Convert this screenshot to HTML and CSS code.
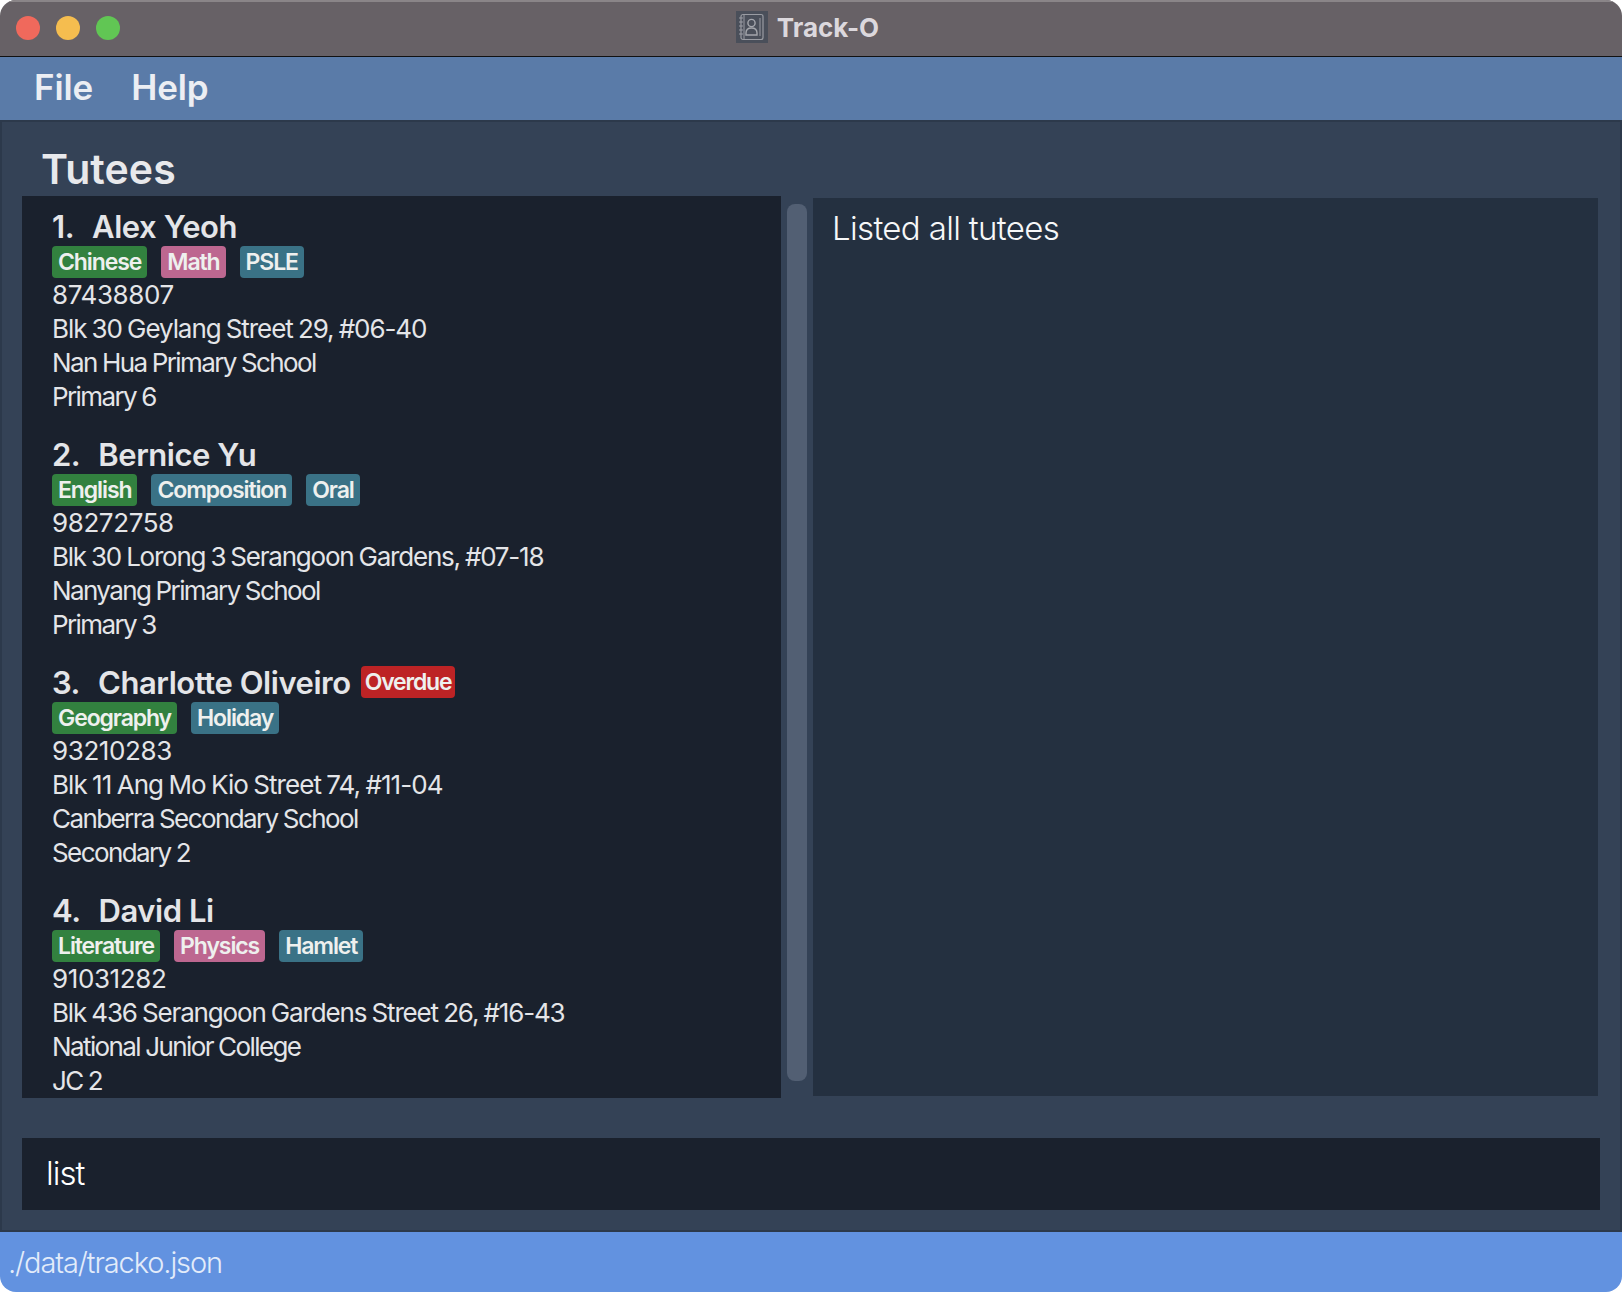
FILE: index.html
```html
<!DOCTYPE html>
<html lang="en">
<head>
<meta charset="utf-8">
<title>Track-O</title>
<link rel="stylesheet" href="styles.css">
</head>
<body>
<div class="window">
  <header class="titlebar">
    <div class="lights"><span class="light red"></span><span class="light yellow"></span><span class="light green"></span></div>
    <div class="title">
      <svg class="app-icon" viewBox="0 0 32 32" width="32" height="32" aria-hidden="true">
        <rect width="32" height="32" fill="#4a4f5a"/>
        <rect x="5" y="3.500" width="22" height="25" rx="2" fill="none" stroke="#9a9ca3" stroke-width="1.200"/>
        <path d="M8 3.500V28.500M24 7V25" fill="none" stroke="#9a9ca3" stroke-width="1"/>
        <path d="M3 7h4M3 11h4M3 15h4M3 19h4M3 23h4" stroke="#9a9ca3" stroke-width="1.200" fill="none"/>
        <circle cx="15.500" cy="12" r="3.600" fill="none" stroke="#a5a7ad" stroke-width="1.400"/>
        <path d="M10 24v-2c0-3 2-5 5.500-5s5.500 2 5.500 5v2z" fill="none" stroke="#a5a7ad" stroke-width="1.400"/>
      </svg>
      <span>Track-O</span>
    </div>
  </header>
  <nav class="menubar"><span>File</span><span>Help</span></nav>
  <main class="content">
    <h1 class="heading">Tutees</h1>
    <div class="panes">
      <section class="list">
        <article class="card">
          <div class="name-row"><span class="num">1.</span><span>Alex Yeoh</span></div>
          <div class="tags"><span class="tag subject">Chinese</span><span class="tag pink">Math</span><span class="tag teal">PSLE</span></div>
          <p class="phone">87438807</p><p class="addr">Blk 30 Geylang Street 29, #06-40</p><p>Nan Hua Primary School</p><p>Primary 6</p>
        </article>
        <article class="card">
          <div class="name-row"><span class="num">2.</span><span>Bernice Yu</span></div>
          <div class="tags"><span class="tag subject">English</span><span class="tag teal">Composition</span><span class="tag teal">Oral</span></div>
          <p class="phone">98272758</p><p class="addr addr-tight">Blk 30 Lorong 3 Serangoon Gardens, #07-18</p><p>Nanyang Primary School</p><p>Primary 3</p>
        </article>
        <article class="card">
          <div class="name-row"><span class="num">3.</span><span>Charlotte Oliveiro</span><span class="tag overdue">Overdue</span></div>
          <div class="tags"><span class="tag subject">Geography</span><span class="tag teal">Holiday</span></div>
          <p class="phone">93210283</p><p class="addr addr-loose">Blk 11 Ang Mo Kio Street 74, #11-04</p><p>Canberra Secondary School</p><p>Secondary 2</p>
        </article>
        <article class="card">
          <div class="name-row"><span class="num">4.</span><span>David Li</span></div>
          <div class="tags"><span class="tag subject">Literature</span><span class="tag pink">Physics</span><span class="tag teal">Hamlet</span></div>
          <p class="phone">91031282</p><p class="addr addr-long">Blk 436 Serangoon Gardens Street 26, #16-43</p><p>National Junior College</p><p>JC 2</p>
        </article>
      </section>
      <div class="scrolltrack"><div class="thumb"></div></div>
      <section class="result">Listed all tutees</section>
    </div>
    <div class="command">list</div>
  </main>
  <footer class="status">./data/tracko.json</footer>
</div>
</body>
</html>
```
FILE: styles.css
```css
* { box-sizing: border-box; }
html, body { margin: 0; padding: 0; background: #fff; }
body { width: 1622px; height: 1292px; overflow: hidden; font-family: Inter, "Liberation Sans", sans-serif; }
.window { width: 1622px; height: 1292px; display: flex; flex-direction: column; border-radius: 16px; overflow: hidden; }
.titlebar { height: 57px; flex: none; background: #676166; border-top: 2px solid #8a8588; border-bottom: 1px solid #111; position: relative; display: flex; align-items: center; justify-content: center; padding-bottom: 4px; }
.lights { position: absolute; left: 16px; top: 14px; display: flex; gap: 16px; }
.light { width: 24px; height: 24px; border-radius: 50%; }
.red { background: #f0695c; }
.yellow { background: #f5bd4f; }
.green { background: #61c654; }
.title { display: flex; align-items: center; gap: 9px; font-size: 26px; font-weight: 700; color: #dcd8dd; margin-left: -7px; }
.app-icon { display: block; }
.menubar { height: 63px; flex: none; background: #5a7ba8; display: flex; align-items: center; gap: 38px; padding: 0 0 3px 34px; font-size: 35px; font-weight: 600; letter-spacing: -0.1px; color: #eceef3; }
.content { flex: 1; min-height: 0; background: #344256; border: 2px solid #2c394b; padding: 0 20px; display: flex; flex-direction: column; }
.heading { margin: 25px 0 0 19px; height: 49px; line-height: 44px; font-size: 41px; font-weight: 600; letter-spacing: 0.1px; color: #e8e9ec; }
.panes { display: flex; height: 902px; flex: none; align-items: flex-start; }
.list { width: 759px; height: 902px; flex: none; background: #1a212d; overflow: hidden; padding: 12px 0 0 30px; color: #e4e5e8; }
.card { height: 228px; }
.card p { margin: 0; height: 34px; line-height: 34px; font-size: 26px; font-weight: 400; letter-spacing: -1.6px; word-spacing: -0.5px; white-space: nowrap; }
.card .phone { letter-spacing: -0.4px; }
.card .addr { letter-spacing: -1.08px; word-spacing: -1px; }
.card .addr-tight { letter-spacing: -1.22px; }
.card .addr-long { letter-spacing: -1.15px; }
.card .addr-loose { letter-spacing: -0.95px; }
.name-row { display: flex; align-items: center; height: 38px; padding-bottom: 2px; font-size: 31px; font-weight: 600; letter-spacing: -0.45px; }
.num { margin-right: 18px; }
.tags { display: flex; gap: 14px; height: 32px; }
.tag { display: inline-block; height: 32px; line-height: 33px; padding: 0 6px; border-radius: 4px; font-size: 23px; font-weight: 600; letter-spacing: -1.1px; color: #eef0ee; white-space: nowrap; }
.subject { background: #32813f; }
.pink { background: #bd6790; }
.teal { background: #3a7286; }
.overdue { background: #bd2325; margin-left: 10px; padding: 0 4px; letter-spacing: -1.2px; }
.scrolltrack { width: 32px; height: 902px; flex: none; padding: 8px 6px 0 6px; }
.thumb { width: 20px; height: 877px; border-radius: 8px; background: #525f73; }
.result { flex: none; width: 785px; height: 898px; margin-top: 2px; background: #243040; color: #f6f7f8; font-size: 33px; font-weight: 300; padding: 10px 19px; letter-spacing: -0.65px; }
.command { height: 72px; flex: none; margin-top: 40px; background: #1a212d; color: #fff; font-size: 33px; font-weight: 300; letter-spacing: -1px; line-height: 70px; padding-left: 24px; }
.status { height: 60px; flex: none; background: #6292e0; color: #e3ecfa; font-size: 29px; font-weight: 300; letter-spacing: -1.1px; line-height: 62px; padding-left: 8px; }
```
